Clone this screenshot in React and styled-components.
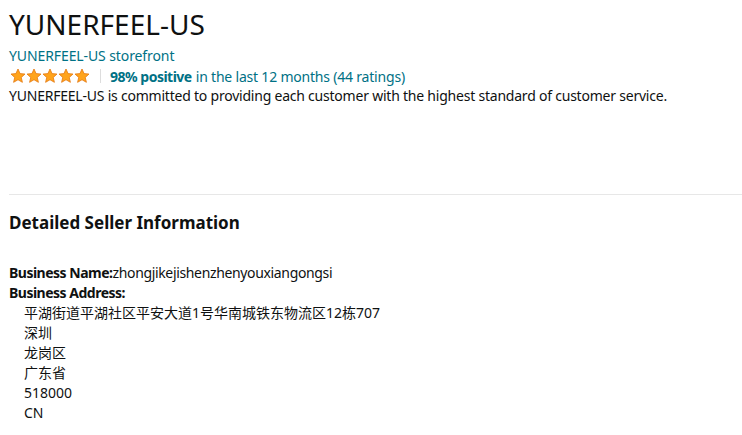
import React from 'react';
import styled, { createGlobalStyle } from 'styled-components';

const GlobalStyle = createGlobalStyle`
  html, body {
    margin: 0;
    padding: 0;
    background: #ffffff;
  }
  body {
    font-family: "Noto Sans", "Noto Sans CJK SC", sans-serif;
    color: #0f1111;
    font-size: 14px;
  }
`;

const Page = styled.div`
  padding: 4px 0 0 9px;
`;

const Title = styled.h1`
  margin: 0;
  font-size: 28px;
  font-weight: 400;
  line-height: 40px;
  color: #0f1111;
`;

const StoreLink = styled.a`
  display: block;
  color: #007185;
  font-size: 14px;
  line-height: 20px;
  letter-spacing: -0.1px;
  text-decoration: none;
  margin-top: 2px;
`;

const RatingRow = styled.div`
  display: flex;
  align-items: center;
  height: 20px;
  font-size: 14px;
  letter-spacing: -0.2px;
  color: #007185;
`;

const Stars = styled.div`
  display: flex;
  margin-left: 1px;
`;

const Divider = styled.span`
  width: 1px;
  height: 14px;
  background: #dddddd;
  margin: 0 9px 0 10px;
`;

const Strong = styled.b`
  font-weight: 700;
  letter-spacing: -0.5px;
  margin-right: 4px;
`;

const Description = styled.p`
  margin: 0;
  font-size: 14px;
  line-height: 20px;
  letter-spacing: -0.22px;
`;

const Rule = styled.hr`
  border: 0;
  border-top: 1px solid #e7e7e7;
  margin: 88px 0 0 0;
`;

const SectionTitle = styled.h2`
  margin: 16px 0 0 0;
  font-size: 17px;
  font-weight: 700;
  line-height: 24px;
`;

const InfoList = styled.div`
  margin-top: 28px;
  font-size: 14px;
  line-height: 20px;
  letter-spacing: -0.35px;
`;

const Label = styled.span`
  font-weight: 700;
  letter-spacing: -0.5px;
`;

const AddressLine = styled.div`
  padding-left: 15px;
  letter-spacing: 0;
`;

const Star = () => (
  <svg width="16" height="16" viewBox="0 0 24 24">
    <path
      d="M12 1.5l3.1 6.9 7.4.7-5.6 5 1.7 7.4L12 17.6l-6.6 3.9 1.7-7.4-5.6-5 7.4-.7z"
      fill="#ffa41c"
      stroke="#e47911"
      strokeWidth="1.2"
      strokeLinejoin="round"
    />
  </svg>
);

const address = [
  '平湖街道平湖社区平安大道1号华南城铁东物流区12栋707',
  '深圳',
  '龙岗区',
  '广东省',
  '518000',
  'CN',
];

const App = () => (
  <>
    <GlobalStyle />
    <Page>
      <Title>YUNERFEEL-US</Title>
      <StoreLink href="#">YUNERFEEL-US storefront</StoreLink>
      <RatingRow>
        <Stars>
          {[0, 1, 2, 3, 4].map((i) => (
            <Star key={i} />
          ))}
        </Stars>
        <Divider />
        <Strong>98% positive</Strong> in the last 12 months (44 ratings)
      </RatingRow>
      <Description>
        YUNERFEEL-US is committed to providing each customer with the highest standard of customer service.
      </Description>
      <Rule />
      <SectionTitle>Detailed Seller Information</SectionTitle>
      <InfoList>
        <div>
          <Label>Business Name:</Label>zhongjikejishenzhenyouxiangongsi
        </div>
        <div>
          <Label>Business Address:</Label>
        </div>
        {address.map((line) => (
          <AddressLine key={line}>{line}</AddressLine>
        ))}
      </InfoList>
    </Page>
  </>
);

export default App;
